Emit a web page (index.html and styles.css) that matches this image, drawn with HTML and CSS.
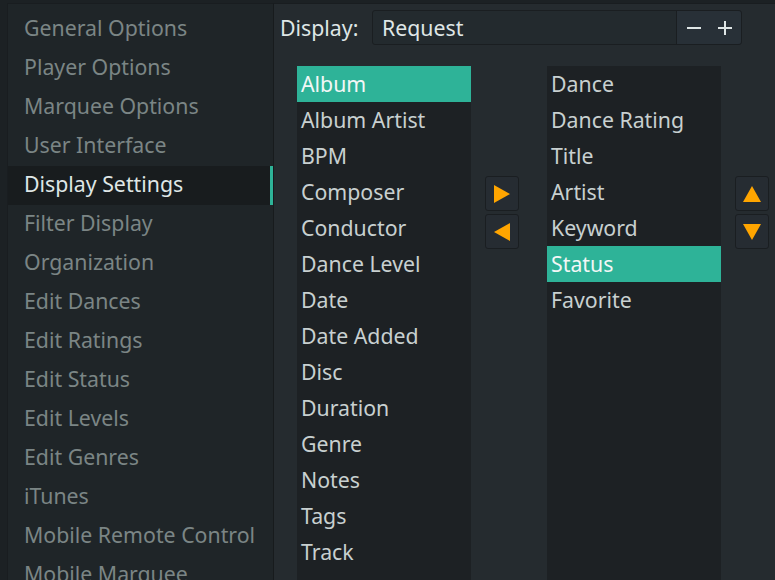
FILE: index.html
```html
<!DOCTYPE html>
<html>
<head>
<meta charset="utf-8">
<link rel="stylesheet" href="styles.css">
</head>
<body>
<div class="app">
  <nav class="sidebar">
    <div class="nav-item">General Options</div>
    <div class="nav-item">Player Options</div>
    <div class="nav-item">Marquee Options</div>
    <div class="nav-item">User Interface</div>
    <div class="nav-item active">Display Settings</div>
    <div class="nav-item">Filter Display</div>
    <div class="nav-item">Organization</div>
    <div class="nav-item">Edit Dances</div>
    <div class="nav-item">Edit Ratings</div>
    <div class="nav-item">Edit Status</div>
    <div class="nav-item">Edit Levels</div>
    <div class="nav-item">Edit Genres</div>
    <div class="nav-item">iTunes</div>
    <div class="nav-item">Mobile Remote Control</div>
    <div class="nav-item">Mobile Marquee</div>
  </nav>
  <main class="panel">
    <div class="display-row">
      <span class="label">Display:</span>
      <div class="combo">
        <span class="combo-value">Request</span>
        <div class="spin">
          <span class="spin-btn minus"></span>
          <span class="spin-btn plus"></span>
        </div>
      </div>
    </div>
    <div class="lists">
      <ul class="list">
        <li class="sel">Album</li>
        <li>Album Artist</li>
        <li>BPM</li>
        <li>Composer</li>
        <li>Conductor</li>
        <li>Dance Level</li>
        <li>Date</li>
        <li>Date Added</li>
        <li>Disc</li>
        <li>Duration</li>
        <li>Genre</li>
        <li>Notes</li>
        <li>Tags</li>
        <li>Track</li>
      </ul>
      <div class="mover">
        <button class="tool-btn"><svg width="16" height="18" viewBox="0 0 16 18"><polygon points="0,0 16,9 0,18" fill="#ffa500"/></svg></button>
        <button class="tool-btn"><svg width="16" height="18" viewBox="0 0 16 18"><polygon points="16,0 0,9 16,18" fill="#ffa500"/></svg></button>
      </div>
      <ul class="list">
        <li>Dance</li>
        <li>Dance Rating</li>
        <li>Title</li>
        <li>Artist</li>
        <li>Keyword</li>
        <li class="sel">Status</li>
        <li>Favorite</li>
      </ul>
      <div class="mover last">
        <button class="tool-btn"><svg width="18" height="16" viewBox="0 0 18 16"><polygon points="0,16 9,0 18,16" fill="#ffa500"/></svg></button>
        <button class="tool-btn"><svg width="18" height="16" viewBox="0 0 18 16"><polygon points="0,0 18,0 9,16" fill="#ffa500"/></svg></button>
      </div>
    </div>
  </main>
</div>
</body>
</html>
```
FILE: styles.css
```css
* { box-sizing: border-box; }
html, body {
  margin: 0;
  padding: 0;
  background: #1c2124;
}
.app {
  width: 775px;
  height: 580px;
  overflow: hidden;
  display: flex;
  padding-top: 3px;
  background: #1c2124;
  font-family: "Noto Sans", sans-serif;
  font-size: 21.3px;
}
.sidebar {
  width: 266px;
  margin-left: 7px;
  flex: none;
  background: #1f2528;
  border-top: 1px solid #191d20;
  border-left: 1px solid #191d20;
  padding-top: 6px;
  display: flex;
  flex-direction: column;
}
.nav-item {
  height: 39px;
  line-height: 36px;
  padding-left: 16px;
  color: #7b8585;
  white-space: nowrap;
  flex: none;
}
.nav-item.active {
  background: #181c1e;
  color: #dfe6e6;
  border-right: 3px solid #2eb398;
}
.panel {
  flex: 1;
  background: #252b2f;
  border-left: 1px solid #171b1d;
  border-top: 1px solid #191d20;
  display: flex;
  flex-direction: column;
  min-width: 0;
}
.display-row {
  display: flex;
  align-items: center;
  padding: 6px 0 0 6px;
  height: 42px;
}
.label {
  color: #dfe6e6;
  width: 92px;
  flex: none;
}
.combo {
  width: 370px;
  height: 35px;
  border: 1px solid #1a1e21;
  border-radius: 3px;
  background: #232a2e;
  display: flex;
  align-items: center;
}
.combo-value {
  flex: 1;
  color: #dfe6e6;
  padding-left: 9px;
}
.spin {
  width: 65px;
  height: 100%;
  border-left: 1px solid #1a1e21;
  background: #283037;
  display: flex;
  align-items: center;
  border-radius: 0 3px 3px 0;
}
.spin-btn {
  position: relative;
  width: 32px;
  height: 100%;
}
.spin-btn::before,
.spin-btn.plus::after {
  content: "";
  position: absolute;
  left: 9px;
  top: 16px;
  width: 14px;
  height: 2px;
  background: #dfe6e6;
}
.spin-btn.plus::after {
  left: 15px;
  top: 10px;
  width: 2px;
  height: 14px;
}
.spin-btn.minus::before { left: 10px; }
.spin-btn.plus::before { left: 9px; }
.lists {
  display: flex;
  margin-top: 21px;
  padding-left: 23px;
  flex: 1;
}
.list {
  list-style: none;
  margin: 0;
  padding: 0;
  width: 174px;
  height: 520px;
  background: #1d2124;
  flex: none;
}
.list li {
  height: 36px;
  line-height: 35px;
  padding-left: 4px;
  color: #c8d0d0;
  white-space: nowrap;
}
.list li.sel {
  background: #2eb398;
  color: #f2f7f6;
}
.mover {
  width: 76px;
  padding-left: 14px;
  padding-top: 110px;
  display: flex;
  flex-direction: column;
  gap: 3px;
  flex: none;
}
.mover.last { width: 48px; }
.tool-btn {
  width: 34px;
  height: 35px;
  padding: 0;
  margin: 0;
  background: #262c32;
  border: 1px solid #1a1e21;
  border-radius: 3px;
  display: flex;
  align-items: center;
  justify-content: center;
}
```
